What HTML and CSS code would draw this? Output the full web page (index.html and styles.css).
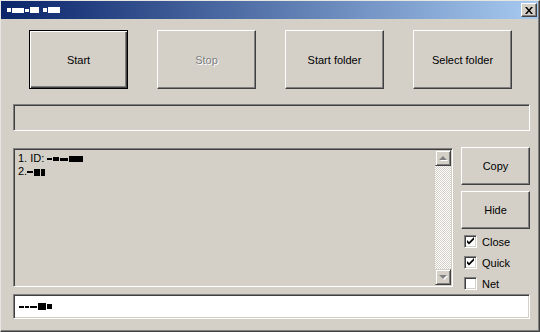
FILE: index.html
```html
<!DOCTYPE html>
<html lang="en">
<head>
  <meta charset="UTF-8" />
  <title>Launcher</title>
  <link rel="stylesheet" href="styles.css">
</head>
<body>
  <div class="window">
    <div class="titlebar">
      <div class="title">
        <span class="blot" style="width:4px;height:4px"></span><span class="blot" style="width:12px;height:5px"></span><span class="blot" style="width:4px;height:3px"></span><span class="blot" style="width:9px;height:6px"></span>
        <span class="gap"></span>
        <span class="blot" style="width:4px;height:4px"></span><span class="blot" style="width:12px;height:6px"></span>
      </div>
      <div class="close">
        <svg width="8" height="7" viewBox="0 0 8 7"><path d="M0 0h2l2 2.5L6 0h2L5 3.5 8 7H6L4 4.5 2 7H0l3-3.5z" fill="#000"/></svg>
      </div>
    </div>

    <div class="client">
      <div class="actions">
        <button class="btn default">Start</button>
        <button class="btn" disabled>Stop</button>
        <button class="btn">Start folder</button>
        <button class="btn">Select folder</button>
      </div>

      <div class="status sunken"></div>

      <div class="main">
        <div class="list sunken">
          <div class="items">
            <div class="item">1. ID: <span class="blot dark" style="width:5px;height:2px"></span><span class="blot dark" style="width:6px;height:4px"></span><span class="blot dark" style="width:8px;height:3px"></span><span class="blot dark" style="width:14px;height:6px"></span></div>
            <div class="item">2.<span class="blot dark" style="width:6px;height:2px"></span><span class="blot dark" style="width:6px;height:7px"></span><span class="blot dark" style="width:4px;height:7px"></span></div>
          </div>
          <div class="scrollbar">
            <div class="arrow"><span class="tri up"></span></div>
            <div class="track"></div>
            <div class="arrow"><span class="tri down"></span></div>
          </div>
        </div>

        <div class="side">
          <button class="btn side-btn">Copy</button>
          <button class="btn side-btn">Hide</button>
          <label class="check">
            <span class="box"><svg width="9" height="9" viewBox="0 0 9 9"><path d="M1 3l2 2 5-5v2.5l-5 5-2-2z" fill="#000"/></svg></span>
            Close
          </label>
          <label class="check">
            <span class="box"><svg width="9" height="9" viewBox="0 0 9 9"><path d="M1 3l2 2 5-5v2.5l-5 5-2-2z" fill="#000"/></svg></span>
            Quick
          </label>
          <label class="check">
            <span class="box"></span>
            Net
          </label>
        </div>
      </div>

      <div class="input sunken">
        <span class="blot dark" style="width:5px;height:2px"></span><span class="blot dark" style="width:4px;height:2px"></span><span class="blot dark" style="width:7px;height:2px"></span><span class="blot dark" style="width:8px;height:7px"></span><span class="blot dark" style="width:5px;height:5px"></span>
      </div>
    </div>
  </div>
</body>
</html>
```

FILE: styles.css
```css
body {
  margin: 0;
  background: #d4d0c8;
  font-family: "Liberation Sans", Arial, sans-serif;
  font-size: 11px;
  color: #000;
}

.window {
  width: 540px;
  height: 332px;
  box-sizing: border-box;
  border: 1px solid;
  border-color: #e8e6e2 #404040 #404040 #e8e6e2;
  box-shadow: inset -1px -1px #808080;
  background: #d4d0c8;
}

.titlebar {
  height: 18px;
  margin-right: 1px;
  display: flex;
  align-items: center;
  justify-content: space-between;
  background: linear-gradient(to right, #0a246a, #a6caf0);
}

.title {
  display: flex;
  align-items: center;
  padding-left: 6px;
}

.title .blot {
  background: #fff;
  margin-right: 1px;
}

.title .gap {
  width: 3px;
}

.blot {
  display: inline-block;
  vertical-align: middle;
}

.blot.dark {
  background: #000;
  margin-right: 1px;
}

.close {
  width: 16px;
  height: 14px;
  margin-right: 1px;
  box-sizing: border-box;
  display: flex;
  align-items: center;
  justify-content: center;
  background: #d4d0c8;
  border: 1px solid;
  border-color: #fff #404040 #404040 #fff;
  box-shadow: inset -1px -1px #808080;
}

.client {
  padding: 11px 9px 0 12px;
}

.actions {
  display: flex;
  gap: 29px;
  padding-left: 16px;
}

.btn {
  width: 99px;
  height: 59px;
  padding: 0;
  box-sizing: border-box;
  font-family: inherit;
  font-size: 11px;
  color: #000;
  background: #d4d0c8;
  border: 1px solid;
  border-color: #fff #404040 #404040 #fff;
  box-shadow: inset -1px -1px #808080, inset 1px 1px #d4d0c8;
}

.btn.default {
  border: 1px solid #000;
  box-shadow: inset 1px 1px #fff, inset -1px -1px #404040, inset -2px -2px #808080;
}

.btn:disabled {
  color: #808080;
  text-shadow: 1px 1px #fff;
}

.sunken {
  box-sizing: border-box;
  border: 1px solid;
  border-color: #808080 #fff #fff #808080;
  box-shadow: inset 1px 1px #404040, inset -1px -1px #d4d0c8;
}

.status {
  height: 27px;
  margin-top: 15px;
}

.main {
  display: flex;
  gap: 8px;
  height: 140px;
  margin-top: 16px;
}

.list {
  width: 440px;
  height: 139px;
  margin-top: 1px;
  display: flex;
  padding: 1px;
}

.items {
  flex: 1;
  padding: 2px 0 0 3px;
  line-height: 13px;
}

.scrollbar {
  width: 16px;
  display: flex;
  flex-direction: column;
}

.track {
  flex: 1;
  background: repeating-conic-gradient(#d4d0c8 0 25%, #fff 0 50%) 0 0 / 2px 2px;
}

.arrow {
  height: 16px;
  box-sizing: border-box;
  display: flex;
  align-items: center;
  justify-content: center;
  background: #d4d0c8;
  border: 1px solid;
  border-color: #d4d0c8 #404040 #404040 #d4d0c8;
  box-shadow: inset 1px 1px #fff, inset -1px -1px #808080;
}

.tri {
  width: 0;
  height: 0;
  border-left: 4px solid transparent;
  border-right: 4px solid transparent;
}

.tri.up {
  border-bottom: 4px solid #808080;
  filter: drop-shadow(1px 1px 0 #fff);
}

.tri.down {
  border-top: 4px solid #808080;
  filter: drop-shadow(1px 1px 0 #fff);
}

.side {
  width: 69px;
  display: flex;
  flex-direction: column;
}

.side-btn {
  width: 69px;
  height: 38px;
  flex: none;
  margin-bottom: 6px;
}

.check {
  display: flex;
  align-items: center;
  gap: 5px;
  height: 13px;
  flex: none;
  padding-left: 3px;
  margin-top: 8px;
}

.side-btn + .check {
  margin-top: 0;
}

.check .box {
  width: 13px;
  height: 13px;
  box-sizing: border-box;
  display: flex;
  align-items: center;
  justify-content: center;
  background: #fff;
  border: 1px solid;
  border-color: #808080 #fff #fff #808080;
  box-shadow: inset 1px 1px #404040, inset -1px -1px #d4d0c8;
}

.input {
  height: 25px;
  margin-top: 7px;
  background: #fff;
  display: flex;
  align-items: center;
  padding-left: 5px;
}
```
